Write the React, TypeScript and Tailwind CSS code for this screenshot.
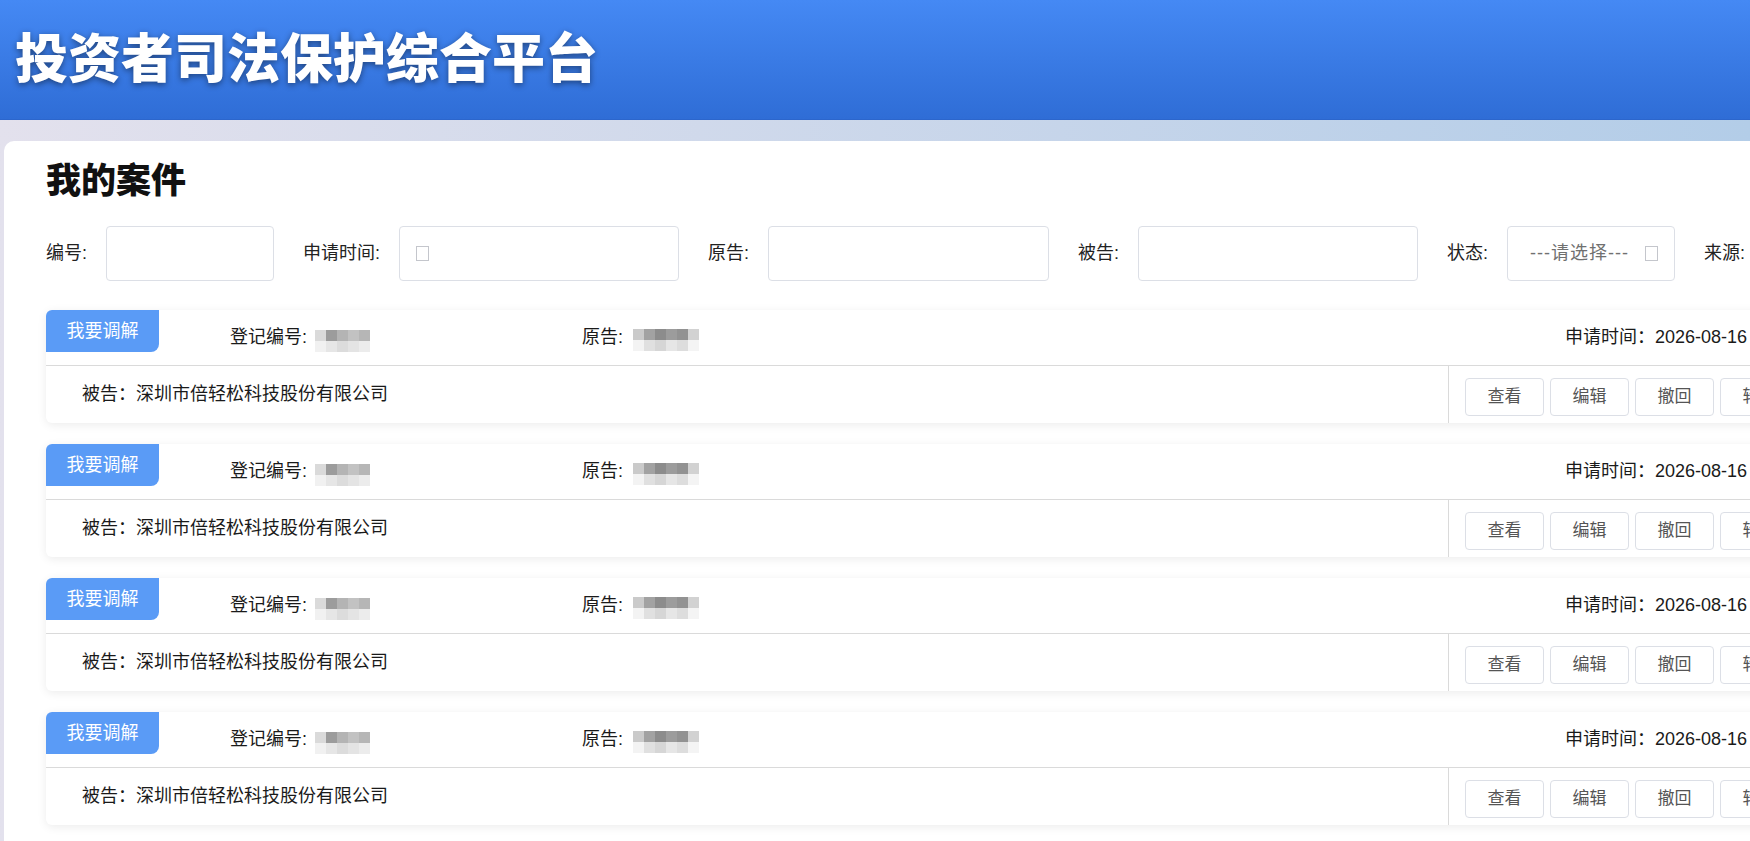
import React from "react";

const FONT = { fontFamily: '"Liberation Sans", "Noto Sans CJK SC", sans-serif' };

const FILTERS = [
  { label: "编号:", width: "w-[168px]", kind: "text" },
  { label: "申请时间:", width: "w-[280px]", kind: "date" },
  { label: "原告:", width: "w-[281px]", kind: "text" },
  { label: "被告:", width: "w-[280px]", kind: "text" },
  { label: "状态:", width: "w-[168px]", kind: "select" },
  { label: "来源:", width: "w-[168px]", kind: "text" },
];

const NO_MOSAIC = [
  ["#dadada", "#9c9c9c", "#b4b4b4", "#c2c2c2", "#b6b6b6"],
  ["#f1f1f1", "#e6e6e6", "#dcdcdc", "#e4e4e4", "#ececec"],
];

const NAME_MOSAIC = [
  ["#cacaca", "#a2a2a2", "#8c8c8c", "#9c9c9c", "#929292", "#d2d2d2"],
  ["#f3f3f3", "#e0e0e0", "#d6d6d6", "#e6e6e6", "#dddddd", "#f4f4f4"],
];

const CASES = [0, 1, 2, 3].map((i) => ({
  id: i,
  defendant: "深圳市倍轻松科技股份有限公司",
  date: "2026-08-16",
}));

function Mosaic({ cells }: { cells: string[][] }) {
  return (
    <div className="flex flex-col blur-[0.7px]">
      {cells.map((row, r) => (
        <div key={r} className="flex">
          {row.map((c, k) => (
            <div key={k} className="h-[11px] w-[11px]" style={{ backgroundColor: c }} />
          ))}
        </div>
      ))}
    </div>
  );
}

function Tofu() {
  return <span className="inline-block h-[15px] w-[13px] border border-[#c4c6cc]" />;
}

function CaseCard({ item }: { item: (typeof CASES)[number] }) {
  return (
    <div className="w-[1860px] rounded-[6px] bg-white shadow-[0_2px_10px_rgba(0,0,0,0.08)]">
      <div className="flex h-[56px] items-center border-b border-[#dadada] text-[18px] text-[#1a1a1a]">
        <div className="flex h-[42px] w-[113px] items-center justify-center self-start rounded-tl-[6px] rounded-br-[8px] bg-[#5a9bf6] text-white">
          我要调解
        </div>
        <div className="flex w-[423px] items-center pl-[71px]">
          <span>登记编号:</span>
          <span className="ml-[8px] mt-[6px]">
            <Mosaic cells={NO_MOSAIC} />
          </span>
        </div>
        <div className="flex w-[983px] items-center">
          <span>原告:</span>
          <span className="ml-[10px] mt-[4px]">
            <Mosaic cells={NAME_MOSAIC} />
          </span>
        </div>
        <div className="whitespace-nowrap">申请时间：{item.date}</div>
      </div>
      <div className="flex h-[57px] text-[18px]">
        <div className="flex w-[1403px] items-center border-r border-[#dadada] pl-[36px] text-[#1a1a1a]">
          被告：{item.defendant}
        </div>
        <div className="flex gap-[6px] pl-[16px] pt-[12px]">
          {["查看", "编辑", "撤回", "转交"].map((b) => (
            <button
              key={b}
              className="flex h-[38px] w-[79px] items-center justify-center rounded-[4px] border border-[#dcdfe6] bg-white text-[17px] text-[#555]"
            >
              {b}
            </button>
          ))}
        </div>
      </div>
    </div>
  );
}

export default function App() {
  return (
    <div
      className="h-[841px] w-[1750px] overflow-hidden bg-gradient-to-r from-[#e3e1ed] to-[#b3cde8]"
      style={FONT}
    >
      <header className="flex h-[120px] items-center border-b border-[#2c66cc] bg-gradient-to-b from-[#4589f4] to-[#2f6dd6] pl-[15px]">
        <h1 className="text-[53px] font-black leading-none text-white [text-shadow:0_2px_6px_rgba(0,0,0,0.45)]">
          投资者司法保护综合平台
        </h1>
      </header>

      <div className="pl-[4px] pt-[21px]">
        <main className="h-[720px] w-[1960px] rounded-tl-[10px] bg-white pl-[42px] pt-[22px]">
          <h2 className="text-[35px] font-black leading-[35px] text-[#111]">我的案件</h2>

          <div className="mt-[28px] flex items-center text-[18px] text-[#222]">
            {FILTERS.map((f, i) => (
              <div key={f.label} className={`flex items-center ${i > 0 ? "ml-[29px]" : ""}`}>
                <span className="mr-[19px] whitespace-nowrap">{f.label}</span>
                <div
                  className={`flex h-[55px] ${f.width} items-center rounded-[4px] border border-[#dcdfe6] bg-white`}
                >
                  {f.kind === "date" && (
                    <span className="ml-[16px] flex">
                      <Tofu />
                    </span>
                  )}
                  {f.kind === "select" && (
                    <div className="flex w-full items-center justify-between pl-[22px] pr-[16px]">
                      <span className="tracking-[1px] text-[#707070]">---请选择---</span>
                      <Tofu />
                    </div>
                  )}
                </div>
              </div>
            ))}
          </div>

          <div className="mt-[29px] flex flex-col gap-[21px]">
            {CASES.map((c) => (
              <CaseCard key={c.id} item={c} />
            ))}
          </div>
        </main>
      </div>
    </div>
  );
}
